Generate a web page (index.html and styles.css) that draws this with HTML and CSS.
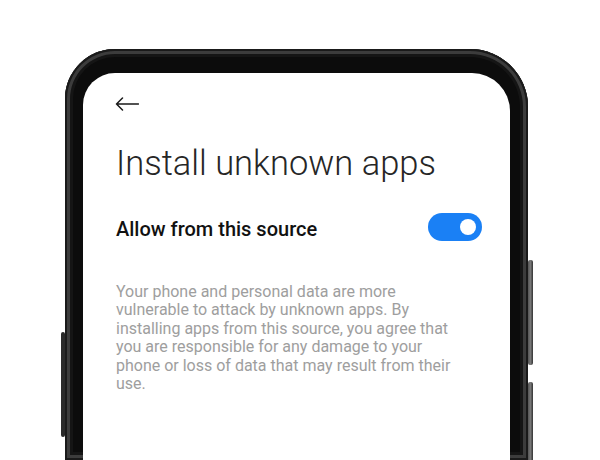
FILE: index.html
```html
<!DOCTYPE html>
<html lang="en">
<head>
<meta charset="utf-8">
<title>Install unknown apps</title>
<link rel="stylesheet" href="styles.css">
</head>
<body>
<div class="stage">
  <div class="phone">
    <span class="btn btn-left"></span>
    <span class="btn btn-right-1"></span>
    <span class="btn btn-right-2"></span>
    <div class="screen">
      <div class="topbar">
        <svg class="back" width="24" height="14" viewBox="0 0 24 14" aria-label="Back">
          <path d="M1.5 7H23.5M7.5 1L1.5 7L7.5 13" fill="none" stroke="#1a1a1a" stroke-width="1.5" stroke-linecap="round" stroke-linejoin="round"/>
        </svg>
      </div>
      <h1 class="title">Install unknown apps</h1>
      <div class="setting">
        <span class="label">Allow from this source</span>
        <span class="toggle"><span class="knob"></span></span>
      </div>
      <p class="desc">Your phone and personal data are more vulnerable to attack by unknown apps. By installing apps from this source, you agree that you are responsible for any damage to your phone or loss of data that may result from their use.</p>
    </div>
  </div>
</div>
</body>
</html>
```

FILE: styles.css
```css
html, body {
  margin: 0;
  padding: 0;
  background: #fff;
  overflow: hidden;
}
body {
  width: 600px;
  height: 460px;
  font-family: Roboto, "Noto Sans", "Liberation Sans", sans-serif;
}
.stage {
  padding: 49px 0 0 65px;
}
.phone {
  position: relative;
  width: 463px;
  height: 411px;
  box-sizing: border-box;
  padding: 24px 18px 0;
  background: #0c0c0c;
  border-radius: 50px 58px 0 0;
  box-shadow: inset 0 0 0 2px #1a1a1a, inset 0 0 0 5px #3c3c3c, inset 0 0 0 8px #151515;
}
.btn {
  position: absolute;
  background: #2a2a2a;
  border-radius: 2px;
}
.btn-left {
  left: -4px;
  top: 283px;
  width: 4px;
  height: 105px;
}
.btn-right-1 {
  right: -5px;
  top: 211px;
  width: 5px;
  height: 105px;
  background: linear-gradient(90deg, #555, #777 50%, #333);
}
.btn-right-2 {
  right: -5px;
  top: 333px;
  width: 5px;
  height: 78px;
  border-radius: 2px 2px 0 0;
  background: linear-gradient(90deg, #555, #777 50%, #333);
}
.screen {
  height: 100%;
  background: #fff;
  border-radius: 32px 38px 0 0;
  padding: 24px 28px 0 33px;
  box-sizing: border-box;
}
.topbar {
  height: 14px;
}
.back {
  display: block;
  margin-left: -1px;
}
.title {
  margin: 32px 0 0;
  font-weight: 300;
  font-size: 34.5px;
  line-height: 40px;
  color: #262626;
  letter-spacing: 0;
}
.setting {
  margin-top: 30px;
  display: flex;
  justify-content: space-between;
  align-items: flex-start;
}
.label {
  padding-top: 2px;
  font-size: 20px;
  line-height: 28px;
  font-weight: 500;
  color: #111;
}
.toggle {
  width: 54px;
  height: 28px;
  border-radius: 14px;
  background: #1a80f5;
  display: flex;
  align-items: center;
  justify-content: flex-end;
  padding-right: 6px;
  box-sizing: border-box;
}
.knob {
  width: 16px;
  height: 16px;
  border-radius: 50%;
  background: #fff;
}
.desc {
  margin: 40px 0 0;
  max-width: 345px;
  font-size: 16px;
  line-height: 18.4px;
  color: #9e9e9e;
}
```
